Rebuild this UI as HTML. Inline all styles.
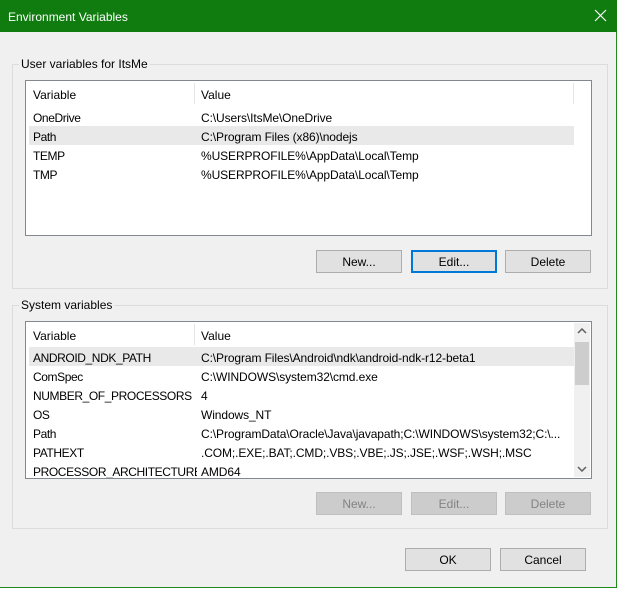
<!DOCTYPE html>
<html><head><meta charset="utf-8"><style>
*{margin:0;padding:0;box-sizing:border-box}
body{width:620px;height:591px;background:#fff;font-family:"Liberation Sans",sans-serif;font-size:12px;color:#000;position:relative;overflow:hidden}
.win{position:absolute;left:0;top:0;width:617px;height:588px;background:#f0f0f0;border-right:1px solid #1e8a1e;border-bottom:1px solid #1e8a1e}
.title{position:absolute;left:0;top:0;width:617px;height:32px;background:#107c10;color:#fff;font-size:12px}
.title span{position:absolute;left:8px;top:10px}
.x{position:absolute;left:594px;top:9px;width:13px;height:13px}
.grp{position:absolute;border:1px solid #dcdcdc}
.lbl{position:absolute;background:#f0f0f0;padding:0 2px}
.list{position:absolute;background:#fff;border:1px solid #828790;overflow:hidden}
.hdr{position:absolute;left:0;top:2px;height:22px}
.hdr div{position:absolute;top:5px}
.sep{position:absolute;left:168px;top:2px;width:1px;height:21px;background:#e5e5e5}
.row{position:absolute;left:3px;height:19px;white-space:nowrap}
.row.sel{background:#e9e9e9}
.row span{position:absolute;top:4px}
.row .v{left:172px;letter-spacing:-0.1px}
.row .k{left:4px;width:164px;overflow:hidden;letter-spacing:-0.4px}
.btn{position:absolute;height:23px;width:86px;background:#e1e1e1;border:1px solid #adadad;text-align:center;line-height:22px}
.btn.f{border:2px solid #0078d7;line-height:20px}
.btn.d{background:#cccccc;border-color:#bfbfbf;color:#838383}
</style></head><body>
<div class="win">
<div class="title"><span>Environment Variables</span>
<svg class="x" viewBox="0 0 13 13"><path d="M1 1L12 12M12 1L1 12" stroke="#fff" stroke-width="1.2"/></svg></div>

<div class="grp" style="left:12px;top:64px;width:596px;height:225px"></div>
<div class="lbl" style="left:19px;top:57px">User variables for ItsMe</div>
<div class="list" style="left:25px;top:80px;width:567px;height:156px">
 <div class="hdr" style="width:548px"><div style="left:7px">Variable</div><div style="left:175px">Value</div></div>
 <div class="sep"></div><div class="sep" style="left:547px"></div>
 <div class="row" style="top:26px;width:545px"><span class="k">OneDrive</span><span class="v">C:\Users\ItsMe\OneDrive</span></div>
 <div class="row sel" style="top:45px;width:545px"><span class="k">Path</span><span class="v">C:\Program Files (x86)\nodejs</span></div>
 <div class="row" style="top:64px;width:545px"><span class="k">TEMP</span><span class="v">%USERPROFILE%\AppData\Local\Temp</span></div>
 <div class="row" style="top:83px;width:545px"><span class="k">TMP</span><span class="v">%USERPROFILE%\AppData\Local\Temp</span></div>
</div>
<div class="btn" style="left:316px;top:250px">New...</div>
<div class="btn f" style="left:411px;top:250px">Edit...</div>
<div class="btn" style="left:505px;top:250px">Delete</div>

<div class="grp" style="left:12px;top:305px;width:596px;height:224px"></div>
<div class="lbl" style="left:19px;top:298px">System variables</div>
<div class="list" style="left:25px;top:321px;width:567px;height:158px">
 <div class="hdr" style="width:548px"><div style="left:7px">Variable</div><div style="left:175px">Value</div></div>
 <div class="sep"></div>
 <div class="row sel" style="top:25px;width:545px"><span class="k">ANDROID_NDK_PATH</span><span class="v">C:\Program Files\Android\ndk\android-ndk-r12-beta1</span></div>
 <div class="row" style="top:44px;width:545px"><span class="k">ComSpec</span><span class="v">C:\WINDOWS\system32\cmd.exe</span></div>
 <div class="row" style="top:63px;width:545px"><span class="k">NUMBER_OF_PROCESSORS</span><span class="v">4</span></div>
 <div class="row" style="top:82px;width:545px"><span class="k">OS</span><span class="v">Windows_NT</span></div>
 <div class="row" style="top:101px;width:545px"><span class="k">Path</span><span class="v">C:\ProgramData\Oracle\Java\javapath;C:\WINDOWS\system32;C:\...</span></div>
 <div class="row" style="top:120px;width:545px"><span class="k">PATHEXT</span><span class="v">.COM;.EXE;.BAT;.CMD;.VBS;.VBE;.JS;.JSE;.WSF;.WSH;.MSC</span></div>
 <div class="row" style="top:139px;width:545px"><span class="k">PROCESSOR_ARCHITECTURE</span><span class="v">AMD64</span></div>
 <div style="position:absolute;left:548px;top:1px;width:16px;height:154px;background:#f0f0f0">
  <svg style="position:absolute;left:3px;top:5px" width="10" height="6" viewBox="0 0 10 6"><path d="M1 5L5 1L9 5" stroke="#606060" stroke-width="1.5" fill="none"/></svg>
  <div style="position:absolute;left:1px;top:19px;width:14px;height:43px;background:#cdcdcd"></div>
  <svg style="position:absolute;left:3px;top:143px" width="10" height="6" viewBox="0 0 10 6"><path d="M1 1L5 5L9 1" stroke="#606060" stroke-width="1.5" fill="none"/></svg>
 </div>
</div>
<div class="btn d" style="left:316px;top:492px">New...</div>
<div class="btn d" style="left:411px;top:492px">Edit...</div>
<div class="btn d" style="left:505px;top:492px">Delete</div>

<div class="btn" style="left:405px;top:548px">OK</div>
<div class="btn" style="left:500px;top:548px">Cancel</div>
</div>
</body></html>
